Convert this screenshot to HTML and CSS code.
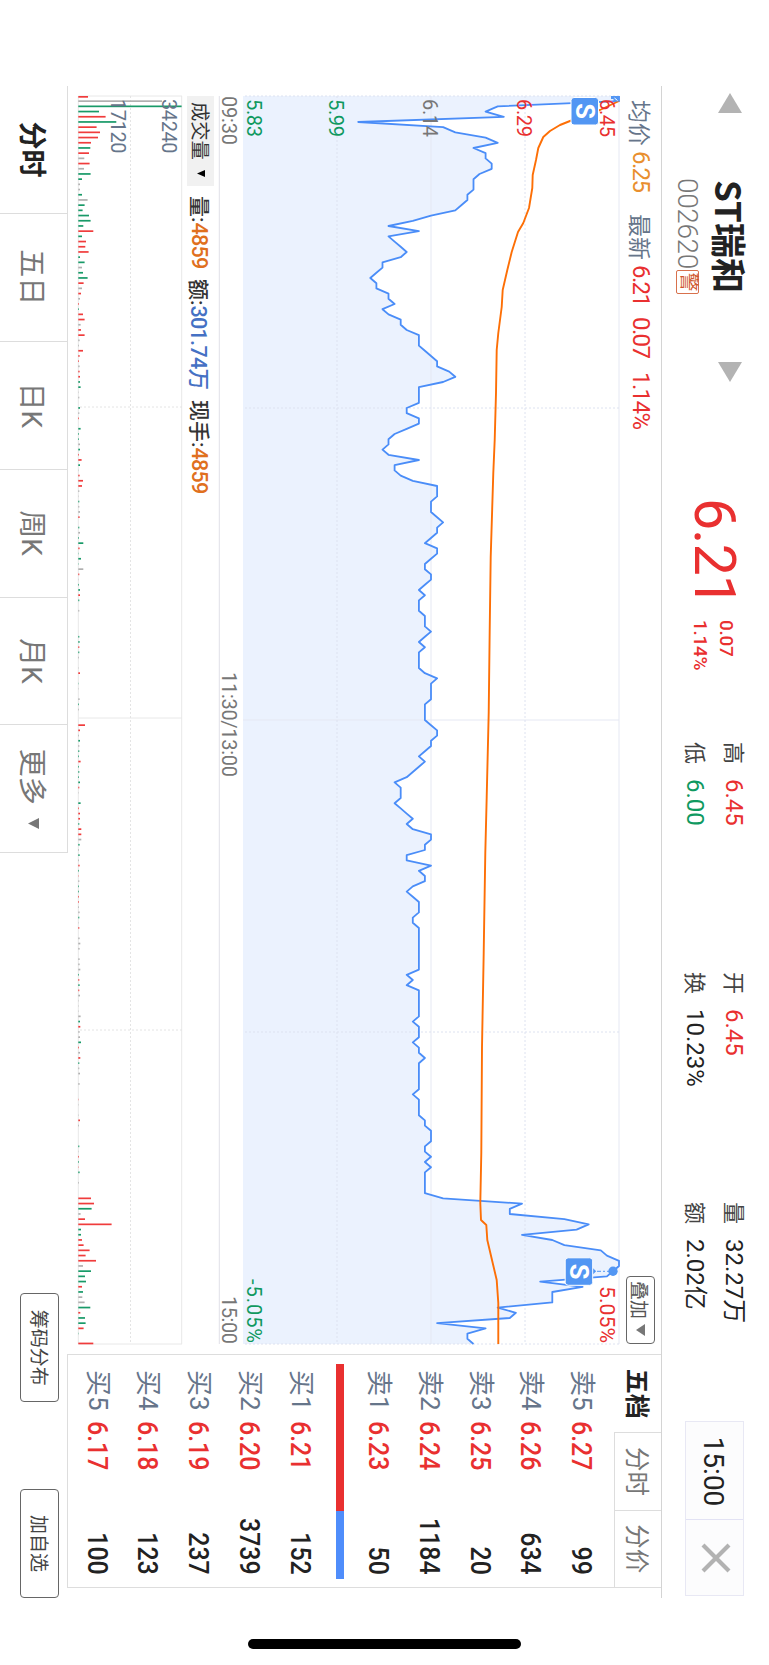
FILE: index.html
```
<!DOCTYPE html>
<html lang="zh-CN">
<head>
  <meta charset="UTF-8" />
  <meta name="viewport" content="width=device-width, initial-scale=1.0"/>
  <title>ST瑞和 002620</title>
  <link rel="stylesheet" href="styles.css">
</head>
<body>
  <div class="window">
  <div class="screen">
    <div class="app">

      <header class="header">
        <svg class="arrow" width="20" height="24" viewBox="0 0 20 24"><path d="M0 12 L20 0 V24 Z"/></svg>
        <div class="stock">
          <div class="stock-name">ST瑞和</div>
          <div class="stock-code"><span>002620</span><i class="warn">警</i></div>
        </div>
        <svg class="arrow" width="20" height="24" viewBox="0 0 20 24"><path d="M20 12 L0 0 V24 Z"/></svg>
        <div class="price red"><span>6.21</span></div>
        <div class="change red"><div>0.07</div><div>1.14%</div></div>
        <div class="stats">
          <div class="stat"><label>高</label><span class="red">6.45</span></div>
          <div class="stat"><label>开</label><span class="red">6.45</span></div>
          <div class="stat"><label>量</label><span>32.27万</span></div>
          <div class="stat"><label>低</label><span class="green">6.00</span></div>
          <div class="stat"><label>换</label><span>10.23%</span></div>
          <div class="stat"><label>额</label><span>2.02亿</span></div>
        </div>
        <div class="clock">
          <div class="clock-time">15:00</div>
          <div class="clock-close">
            <svg width="30" height="30" viewBox="0 0 30 30"><path d="M2 2 L28 28 M28 2 L2 28"/></svg>
          </div>
        </div>
      </header>

      <main class="main">
        <section class="charts">
          <div class="info">
            <span class="info-label">均价</span><span class="info-num orange w39">6.25</span>
            <span class="info-label second">最新</span><span class="info-num red w52">6.21</span><span class="info-num red w55">0.07</span><span class="info-num red">1.14%</span>
            <div class="overlay-btn">叠加<svg width="12" height="9" viewBox="0 0 12 9"><path d="M0 0 H12 L6 9 Z"/></svg></div>
          </div>

          <svg class="price-chart" width="1248" height="400" viewBox="0 0 1248 400">
            <path id="area" class="area"/>
            <g class="grid">
              <path d="M0 0 H1248 M0 188 H1248 M624 0 V376"/>
              <path class="dash" d="M0 94 H1248 M0 282 H1248 M312 0 V376 M936 0 V376 M0 0 V376 M1248 0 V376"/>
              <path class="base" d="M0 399.7 H1248"/>
            </g>
            <path id="line" class="line"/>
            <path class="avg" d="M5 0 L14 19 L25 49 L29 59 L35 69 L41 75.7 L52 80.7 L64 83 L79 86.3 L92 86.7 L112 90 L127 95.7 L136 101 L156 107.3 L174 111.7 L194 116.3 L211 117.3 L237 120.7 L254 122.3 L297 123 L344 124.3 L377 125.7 L461 128.3 L534 129.3 L617 130.3 L701 132.3 L757 133.7 L857 135.3 L951 137 L1057 137.7 L1107 138.7 L1124 138 L1129 132.7 L1144 131.7 L1167 126.3 L1184 122.3 L1207 120.7 L1248 120.7"/>
            <g class="axis">
              <text class="t-red" x="3" y="19" textLength="38">6.45</text>
              <text class="t-red" x="3" y="101.7" textLength="38">6.29</text>
              <text x="3" y="195.7" textLength="38">6.14</text>
              <text class="t-green" x="3" y="290" textLength="38">5.99</text>
              <text class="t-green" x="3" y="372.3" textLength="38">5.83</text>
              <text class="t-red" x="1190" y="19" textLength="57" lengthAdjust="spacingAndGlyphs">5.05%</text>
              <text class="t-green" x="1183" y="372.3" textLength="64">-5.05%</text>
              <text x="0" y="397.3" textLength="49">09:30</text>
              <text x="576" y="397.3" textLength="105">11:30/13:00</text>
              <text x="1200" y="397.3" textLength="48">15:00</text>
            </g>
            <path class="flag" d="M0 0 H5.5 V5.5 H3 V8 H0 Z"/>
            <path class="flag-cut" d="M2 4.5 L4.5 1.5"/>
            <rect class="badge" x="1.5" y="20.5" width="27.5" height="27.5" rx="3"/>
            <text class="badge-text" x="15.2" y="43.2">S</text>
            <path class="stem" d="M1175.3 8 V24"/>
            <circle class="dot" cx="1175.3" cy="6" r="4.7"/>
            <path class="tip" d="M1171.8 26.5 L1175.3 22.8 L1178.8 26.5 Z"/>
            <rect class="badge" x="1161.8" y="26.3" width="27.5" height="27.5" rx="3"/>
            <text class="badge-text" x="1175.5" y="49.2">S</text>
          </svg>

          <div class="indicator">
            <div class="indicator-name">成交量<svg width="7" height="8" viewBox="0 0 7 8"><path d="M0 0 H7 L3.5 8 Z"/></svg></div>
            <span class="ind i1">量:<b class="orange-d">4859</b></span>
            <span class="ind i2">额:<b class="blue">301.74万</b></span>
            <span class="ind">现手:<b class="orange-d">4859</b></span>
          </div>

          <svg class="vol-chart" width="1248" height="104" viewBox="0 0 1248 104">
            <g class="grid vol">
              <path d="M0 .3 H1248 M622 0 V103.7 M0 103.7 H1248 M0 0 V103.7 M1248 0 V103.7"/>
              <path class="dash" d="M0 51.5 H1248 M311 0 V103 M934 0 V103"/>
            </g>
            <g id="bars"></g>
            <g class="axis axis-vol">
              <text x="3" y="19.7" textLength="54.5">34240</text>
              <text x="3" y="71.3" textLength="54.5">17120</text>
            </g>
          </svg>
        </section>

        <section class="book">
          <div class="book-tabs">
            <div class="book-tab on">五档</div>
            <div class="book-tab">分时</div>
            <div class="book-tab">分价</div>
          </div>
          <div class="rows">
            <div class="row"><label>卖5</label><span class="p">6.27</span><span class="q">99</span></div>
            <div class="row"><label>卖4</label><span class="p">6.26</span><span class="q">634</span></div>
            <div class="row"><label>卖3</label><span class="p">6.25</span><span class="q">20</span></div>
            <div class="row"><label>卖2</label><span class="p">6.24</span><span class="q">1184</span></div>
            <div class="row"><label>卖1</label><span class="p">6.23</span><span class="q">50</span></div>
          </div>
          <div class="ratio"><div class="buy" style="width: 68.5%"></div><div class="sell"></div></div>
          <div class="rows">
            <div class="row"><label>买1</label><span class="p">6.21</span><span class="q">152</span></div>
            <div class="row"><label>买2</label><span class="p">6.20</span><span class="q">3739</span></div>
            <div class="row"><label>买3</label><span class="p">6.19</span><span class="q">237</span></div>
            <div class="row"><label>买4</label><span class="p">6.18</span><span class="q">123</span></div>
            <div class="row"><label>买5</label><span class="p">6.17</span><span class="q">100</span></div>
          </div>
        </section>
      </main>

      <footer class="footer">
        <div class="tab on">分时</div>
        <div class="tab">五日</div>
        <div class="tab">日K</div>
        <div class="tab">周K</div>
        <div class="tab">月K</div>
        <div class="tab">更多<svg width="11" height="11" viewBox="0 0 11 11"><path d="M0 0 H11 L5.5 11 Z"/></svg></div>
        <div class="btn btn-chips">筹码分布</div>
        <div class="btn">加自选</div>
      </footer>
    </div>
    <div class="home-bar"></div>
  </div>
  </div>

  <script src="chart.js"></script>
</body>
</html>
```
FILE: styles.css
```
* {
  box-sizing: border-box;
}

body {
  margin: 0;
  background: #fff;
}

.window {
  width: 769px;
  height: 1665px;
  overflow: hidden;
  contain: paint;
}

/* landscape page shown on a portrait window */
.screen {
  position: relative;
  width: 1665px;
  height: 769px;
  transform-origin: 0 0;
  transform: translateX(769px) rotate(90deg);
  font-family: Roboto, "Noto Sans CJK SC", sans-serif;
  color: #222;
  white-space: nowrap;
}

.app {
  width: 1512px;
  height: 769px;
  margin-left: 86px;
  display: flex;
  flex-direction: column;
}

.red { color: #e93030; }
.green { color: #0f9960; }
.orange { color: #e98f2e; }
.orange-d { color: #e0701e; }
.blue { color: #4571c4; }

/* header */
.header {
  height: 108px;
  flex: none;
  display: flex;
  align-items: flex-start;
  border-bottom: 1px solid #d4d4d4;
}

.arrow {
  margin: 27px 0 0 7px;
  fill: #b3b3b3;
}

.stock {
  width: 175px;
  margin-left: 67px;
  padding-top: 19px;
}

.stock-name {
  height: 40px;
  line-height: 40px;
  font-family: "Noto Sans CJK SC", sans-serif;
  font-size: 35px;
  font-weight: 600;
}

.stock-code {
  display: flex;
  align-items: center;
  height: 32px;
  margin-top: 6px;
  font-size: 28px;
  font-weight: 300;
  color: #777;
}

.stock-code span {
  width: 92px;
  letter-spacing: -0.4px;
  margin-left: -2px;
}

.warn {
  width: 24px;
  height: 23px;
  line-height: 20px;
  border: 1px solid #d8714c;
  border-radius: 2px;
  font-size: 19px;
  font-style: normal;
  font-weight: 400;
  text-align: center;
  color: #d0562c;
}

.price {
  width: 122px;
  margin: 21px 0 0 116px;
  height: 68px;
  line-height: 68px;
  font-size: 57.5px;
}

.price span {
  display: inline-block;
  transform: scaleX(1);
  transform-origin: 0 50%;
  letter-spacing: -1px;
}

.change {
  width: 122px;
  padding-top: 30px;
  font-size: 19px;
  line-height: 25.5px;
  font-weight: 500;
  letter-spacing: -0.3px;
}

.stats {
  width: 679px;
  padding-top: 16px;
  display: grid;
  grid-template-columns: 230px 230px 219px;
  grid-auto-rows: 39px;
}

.stat {
  display: flex;
  line-height: 39px;
  font-size: 24px;
}

.stat label {
  width: 37px;
  font-size: 22px;
  color: #444;
}

.clock {
  display: flex;
  width: 175px;
  height: 59px;
  margin-top: 25px;
  border: 1px solid #e8e8f4;
  background: #fcfcfd;
}

.clock-time {
  width: 97px;
  padding-left: 2px;
  text-align: center;
  line-height: 60px;
  font-size: 28px;
}

.clock-close {
  flex: 1;
  display: flex;
  align-items: center;
  justify-content: center;
  padding-bottom: 3px;
  border-left: 1px solid #e2e2f4;
}

.clock-close path {
  stroke: #b2b2b2;
  stroke-width: 4.2;
}

/* charts */
.main {
  display: flex;
  height: 594px;
  flex: none;
}

.charts {
  width: 1268px;
  padding-left: 10px;
}

.charts svg {
  display: block;
}

.info {
  display: flex;
  align-items: center;
  height: 42px;
  padding: 0 10px 2px 4px;
}

.info-label {
  width: 51px;
  font-size: 23px;
  color: #66758a;
}

.second {
  margin-left: 25px;
}

.info-num {
  font-size: 24px;
  letter-spacing: -1.6px;
}

.w39 { width: 38px; }
.w52 { width: 52px; }
.w55 { width: 55px; }

.overlay-btn {
  display: flex;
  align-items: center;
  justify-content: space-between;
  width: 68px;
  height: 29px;
  margin-left: auto;
  padding: 0 7px 0 4px;
  border: 1px solid #666;
  border-radius: 4px;
  font-size: 19px;
  color: #555;
}

.overlay-btn path, .tab path {
  fill: #777;
}

.price-chart, .vol-chart {
  overflow: visible;
}

.area {
  fill: #ebf2fe;
}

.line {
  fill: none;
  stroke: #4a8df8;
  stroke-width: 1.8;
  stroke-linejoin: round;
}

.avg {
  fill: none;
  stroke: #fd6f06;
  stroke-width: 1.9;
  stroke-linejoin: round;
}

.grid path {
  fill: none;
  stroke: #e5e8f3;
  stroke-width: 1;
}

.grid .dash {
  stroke: #dde2f0;
  stroke-dasharray: 2 2;
}

.grid .base {
  stroke: #e0e0e8;
}

.vol path {
  stroke: #e8e8e8;
}

.vol .dash {
  stroke: #e4e4e4;
}

.axis text {
  font-size: 20px;
  fill: #777;
}

.axis .t-red { fill: #e93030; }
.axis .t-green { fill: #0f9960; }
.axis-vol text { fill: #66758a; }

.badge {
  fill: #5296f3;
  stroke: #fff;
  stroke-width: 1;
}

.badge-text {
  fill: #fff;
  font-size: 25.5px;
  font-weight: 700;
  text-anchor: middle;
}

.dot, .tip, .flag {
  fill: #5296f3;
}

.flag-cut {
  stroke: #fff;
  stroke-width: 1;
}

.stem {
  stroke: #5296f3;
  stroke-dasharray: 4 2 2 2;
}

.indicator {
  display: flex;
  align-items: center;
  height: 37px;
  padding-bottom: 1px;
}

.indicator-name {
  display: flex;
  align-items: center;
  justify-content: space-between;
  width: 90px;
  height: 27px;
  padding: 0 9px 0 6px;
  background: #f1f1f1;
  font-size: 19.3px;
  color: #333;
}

.ind {
  margin-left: 10px;
  font-size: 21px;
  font-weight: 500;
  color: #333;
}

.ind b {
  font-size: 21.5px;
  font-weight: 500;
  letter-spacing: -0.7px;
}

.i1 { width: 73px; }
.i2 { width: 111px; }

.r { fill: #f03c3c; }
.g { fill: #189a68; }
.x { fill: #b0b0b0; }

/* order book */
.book {
  width: 234px;
  border: 1px solid #ddd;
  border-top: 0;
}

.book-tabs {
  display: flex;
  height: 47px;
}

.book-tab {
  width: 77.5px;
  border: 1px solid #ddd;
  border-width: 0 0 1px 1px;
  text-align: center;
  line-height: 49px;
  font-size: 24.5px;
  color: #777;
}

.book-tab.on {
  border: 0;
  font-size: 25px;
  font-weight: 700;
  color: #222;
}

.rows {
  padding: 7px 12px 0 15px;
}

.row {
  display: flex;
  height: 50.7px;
  line-height: 51px;
  font-size: 28px;
  font-weight: 500;
}

.row label {
  width: 51px;
  font-size: 26px;
  font-weight: 400;
  color: #66758a;
}

.p, .q {
  transform: scaleX(.89);
}

.p {
  color: #e93030;
  transform-origin: 0 50%;
}

.q {
  margin-left: auto;
  transform-origin: 100% 50%;
}

.ratio {
  display: flex;
  height: 8px;
  margin: 10px 8px 3px 9px;
}

.buy {
  background: #e93030;
}

.sell {
  flex: 1;
  background: #4f8dfb;
}

/* period tabs */
.footer {
  display: flex;
  height: 68px;
  margin-top: -1px;
}

.tab {
  width: 128px;
  height: 68px;
  border: 1px solid #ddd;
  border-width: 1px 1px 0 0;
  text-align: center;
  line-height: 71px;
  font-size: 28px;
  color: #777;
}

.tab.on {
  font-weight: 700;
  color: #222;
}

.tab svg {
  margin-left: 13px;
  vertical-align: 6px;
}

.btn {
  width: 109px;
  height: 39px;
  margin: 9px 0 0 87px;
  border: 1px solid #666;
  border-radius: 4px;
  text-align: center;
  line-height: 39px;
  font-size: 19px;
  color: #444;
}

.btn-chips {
  margin-left: 440px;
}

.home-bar {
  position: absolute;
  left: 1639px;
  top: 248px;
  width: 10px;
  height: 273px;
  border-radius: 5px;
  background: #000;
}
```
FILE: chart.js
```
// one value per minute, in cents away from the 6.14 close
const prices = [
  31, 31, 11, 9, 12, -12, 2, 4, 9, 11,
  7, 9, 9, 10, 10, 8, 7, 7, 7, 6,
  6, 5, 4, 0, -3, -7, -2, -7, -6, -5,
  -4, -5, -8, -8, -9, -10, -9, -9, -7, -7,
  -6, -8, -7, -5, -5, -4, -2, -2, -2, -1,
  0, 1, 1, 3, 4, 2, -2, -2, -2, -2,
  -4, -4, -2, -2, -4, -6, -7, -7, -8, -7,
  -2, -6, -6, -5, -3, 1, 1, 1, 0, 0,
  0, 1, 2, 1, 1, 0, -1, 1, 1, 0,
  -1, -1, 0, 0, -1, -2, -1, -2, -2, -2,
  -1, -1, -1, 0, -1, -2, -1, -2, -2, -2,
  -2, -1, 1, 0, 0, 0, 0, -1, -1, -1,
  -1, 0, 1, 1, 0, 0, -1, -2, -1, -2,
  -3, -4, -6, -5, -5, -5, -6, -5, -4, -3,
  -4, -3, 0, 0, -1, -1, -4, -4, 0, -2,
  -1, -1, -3, -4, -3, -2, -2, -2, -3, -3,
  -2, -2, -2, -2, -2, -2, -2, -2, -2, -4,
  -3, -4, -2, -2, -2, -2, -2, -2, -3, -2,
  -2, -2, -3, -2, -2, -1, -2, -2, -2, -2,
  -2, -2, -3, -2, -2, -2, -2, -1, -1, 0,
  0, 0, -1, -1, 0, -1, 0, -1, -1, -1,
  -1, -1, 2, 15, 13, 13, 22, 26, 24, 15,
  20, 22, 28, 29, 31, 31, 30, 29, 18, 25,
  20, 20, 20, 11, 14, 13, 1, 9, 6, 6, 7
];

// r = up, g = down, x = flat
const volumes = `
r29 x251 g310 g62 r82 g114 r55 r65 r59 r38 g36 r32 x18 r34 x17 g37 g11 x5 x5 g11
x28 g19 g13 g32 g37 g15 r45 g11 r23 r21 r31 g5 g19 x11 g14 g28 r16 x11 r8 x5
r2 g2 r14 r19 x7 r8 r19 x4 x2 r14 r4 r2 x4 r4 r5 g5 g7 x1 x3 x0
g5 x3 r2 x0 g7 g2 g2 x5 g5 r2 r10 g5 x1 r4 r14 r11 x3 x1 g3 x3
x5 r4 x0 g3 x5 g2 g15 r4 g1 g8 g1 x15 r3 x1 g2 g5 r5 g3 x0 x3
x0 x0 x0 x0 g3 g4 r3 g3 x2 x0 x1 r5 x0 g1 x1 x0 x4 g2 x2 x0
x0 r20 r5 x2 g5 x3 g3 g2 r7 g2 g3 g2 g5 r3 x1 x0 g7 r2 r5 r5
g3 r9 r9 x9 g4 x2 g4 x2 r4 g2 r1 x3 g2 g2 r2 r2 x2 x4 g3 x1
r3 x0 x4 x6 x4 x0 x4 x4 x6 g2 r3 g4 r3 x5 x1 x1 x1 x7 g5 r6
x4 x5 g8 r2 x5 r6 g3 x3 x5 x0 x4 x0 x0 r1 x1 x0 x1 r5 x2 x0
x0 x0 g3 x1 r2 g2 r1 g4 x0 x2 x0 x0 r38 r47 g40 x7 r20 r100 g8 g8
r11 r16 r34 r22 r53 x14 g38 g20 g23 r11 g14 x12 x19 g36 r6 g20 g22 r16 g1 x0
r45`.trim().split(/\s+/);

const step = 1248 / 240;

const points = prices.map((p, i) => `${(i * step).toFixed(1)} ${(188 - p * 6.065).toFixed(1)}`);
document.getElementById("line").setAttribute("d", "M" + points.join(" L"));
document.getElementById("area").setAttribute("d", "M" + points.join(" L") + " L1248 376 L0 376 Z");

document.getElementById("bars").innerHTML = volumes.map((v, i) => {
  const h = v.slice(1) / 3;
  const x = Math.min(Math.max(i * step - 0.9, 0), 1246.6);
  return `<rect class="${v[0]}" x="${x.toFixed(1)}" y="${(103.7 - h).toFixed(1)}" width="1.7" height="${h.toFixed(1)}"/>`;
}).join("");
```
